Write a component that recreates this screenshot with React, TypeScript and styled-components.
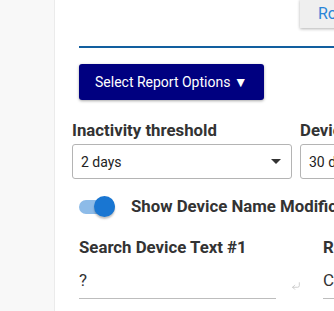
import React from "react";
import styled, { createGlobalStyle } from "styled-components";
import { CornerDownLeft } from "lucide-react";

const Global = createGlobalStyle`
  html, body { margin: 0; padding: 0; background: #fff; }
  body { font-family: Roboto, "Noto Sans", Arial, sans-serif; overflow: hidden; }
  * { box-sizing: border-box; }
`;

const Page = styled.div`
  display: flex;
  width: 334px;
  height: 311px;
  overflow: hidden;
`;

const Sidebar = styled.aside`
  flex: 0 0 55px;
  background: #f8f8f8;
  border-right: 1px solid #ebebeb;
`;

const Main = styled.main`
  flex: 1;
  min-width: 0;
  overflow: hidden;
  padding-left: 17px;
`;

const Inner = styled.div`
  width: 700px;
`;

const Header = styled.div`
  height: 29px;
  padding-left: 228px;
  display: flex;
`;

const Tab = styled.button`
  height: 29px;
  width: 120px;
  border: none;
  margin-top: -1px;
  background: #efefef;
  box-shadow: 0 1px 3px rgba(0, 0, 0, 0.3);
  color: #2a85d8;
  font-family: Roboto, Arial, sans-serif;
  font-size: 16px;
  text-align: left;
  padding: 0 0 0 18px;
  line-height: 28px;
`;

const Divider = styled.div`
  margin: 17px 0 0 7px;
  height: 2px;
  background: #125f9f;
`;

const OptionsButton = styled.button`
  margin: 16px 0 0 7px;
  height: 36px;
  width: 185px;
  background: #000080;
  color: #fff;
  border: none;
  border-radius: 3px;
  box-shadow: 0 1px 3px rgba(0, 0, 0, 0.35);
  font-family: Roboto, Arial, sans-serif;
  font-size: 14px;
  text-align: left;
  padding: 0 0 0 16px;
`;

const FieldRow = styled.div<{ $gap: number; $top: number; $indent?: number }>`
  display: flex;
  gap: ${(p) => p.$gap}px;
  margin-top: ${(p) => p.$top}px;
  padding-left: ${(p) => p.$indent ?? 0}px;
`;

const Field = styled.div<{ $width: number }>`
  width: ${(p) => p.$width}px;
  display: flex;
  flex-direction: column;
`;

const Label = styled.div`
  font-weight: 700;
  font-size: 16.8px;
  line-height: 19px;
  color: #333;
  white-space: nowrap;
`;

const SelectBox = styled.div`
  margin-top: 4px;
  height: 35px;
  border: 1px solid #b4b4b4;
  border-radius: 3px;
  display: flex;
  align-items: center;
  justify-content: space-between;
  padding: 0 10px 0 8px;
  font-size: 14px;
  color: #222;
`;

const Caret = styled.span`
  width: 0;
  height: 0;
  border-left: 5px solid transparent;
  border-right: 5px solid transparent;
  border-top: 5px solid #333;
`;

const SwitchRow = styled.div`
  display: flex;
  align-items: center;
  margin: 18px 0 0 7px;
  gap: 16px;
`;

const Track = styled.div`
  position: relative;
  width: 36px;
  height: 14px;
  border-radius: 7px;
  background: #8dbbe8;
`;

const Thumb = styled.div`
  position: absolute;
  top: -4px;
  left: 15px;
  width: 21px;
  height: 21px;
  border-radius: 50%;
  background: #1976d2;
  box-shadow: 0 2px 2px rgba(0, 0, 0, 0.25);
`;

const InputWrap = styled.div`
  display: flex;
  align-items: flex-end;
  gap: 15px;
`;

const TextInput = styled.div`
  margin-top: 12px;
  width: 198px;
  height: 30px;
  border-bottom: 1px solid #bdbdbd;
  font-size: 17px;
  color: #333;
  line-height: 22px;
`;

const EnterIcon = styled.span`
  display: flex;
  color: #b8b8b8;
  margin-bottom: 8px;
`;

export default function App() {
  return (
    <>
      <Global />
      <Page>
        <Sidebar />
        <Main>
          <Inner>
            <Header>
              <Tab>Roles</Tab>
            </Header>
            <Divider />
            <OptionsButton>Select Report Options ▼</OptionsButton>
            <FieldRow $gap={8} $top={21}>
              <Field $width={220}>
                <Label>Inactivity threshold</Label>
                <SelectBox>
                  <span>2 days</span>
                  <Caret />
                </SelectBox>
              </Field>
              <Field $width={220}>
                <Label>Device removal threshold</Label>
                <SelectBox>
                  <span>30 days</span>
                  <Caret />
                </SelectBox>
              </Field>
            </FieldRow>
            <SwitchRow>
              <Track>
                <Thumb />
              </Track>
              <Label>Show Device Name Modifications</Label>
            </SwitchRow>
            <FieldRow $gap={22} $top={22} $indent={7}>
              <Field $width={222}>
                <Label>Search Device Text #1</Label>
                <InputWrap>
                  <TextInput>?</TextInput>
                  <EnterIcon>
                    <CornerDownLeft size={10} strokeWidth={1.6} />
                  </EnterIcon>
                </InputWrap>
              </Field>
              <Field $width={222}>
                <Label>Replace Device Text #1</Label>
                <InputWrap>
                  <TextInput>Computer</TextInput>
                </InputWrap>
              </Field>
            </FieldRow>
          </Inner>
        </Main>
      </Page>
    </>
  );
}
